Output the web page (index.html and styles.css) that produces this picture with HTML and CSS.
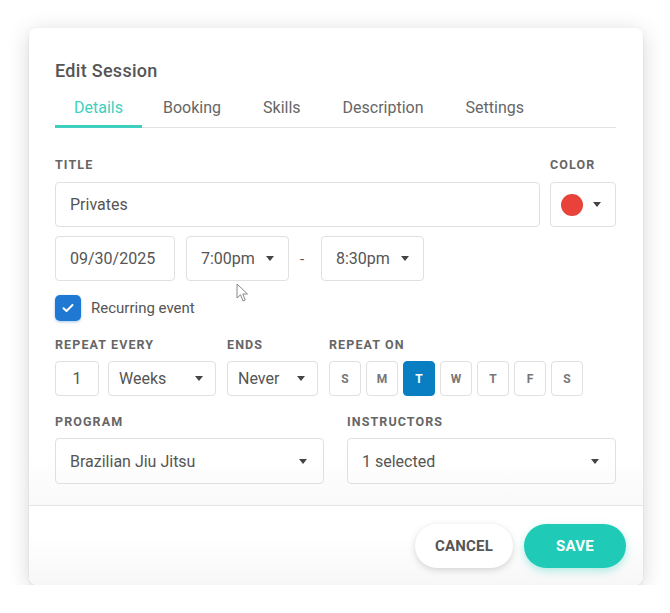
FILE: index.html
```html
<!DOCTYPE html>
<html lang="en">
<head>
    <meta charset="UTF-8">
    <meta name="viewport" content="width=device-width, initial-scale=1.0">
    <title>Edit Session</title>
    <link rel="stylesheet" href="styles.css">
</head>
<body>
    <div class="modal">
        <div class="modal-body">
            <h2 class="modal-title">Edit Session</h2>

            <div class="tabs">
                <span class="tab active">Details</span>
                <span class="tab">Booking</span>
                <span class="tab">Skills</span>
                <span class="tab">Description</span>
                <span class="tab">Settings</span>
            </div>

            <div class="row row-title">
                <div class="field grow">
                    <div class="label">Title</div>
                    <div class="input">Privates</div>
                </div>
                <div class="field">
                    <div class="label">Color</div>
                    <div class="input color-select">
                        <span class="dot"></span>
                        <span class="caret"></span>
                    </div>
                </div>
            </div>

            <div class="row row-time">
                <div class="input date">09/30/2025</div>
                <div class="input select time">7:00pm <span class="caret"></span></div>
                <span class="dash">-</span>
                <div class="input select time">8:30pm <span class="caret"></span></div>
            </div>

            <label class="check">
                <span class="box">
                    <svg width="12" height="10" viewBox="0 0 12 10"><path d="M1.5 5.2 L4.5 8 L10.5 2" fill="none" stroke="#fff" stroke-width="2" stroke-linecap="round" stroke-linejoin="round"/></svg>
                </span>
                Recurring event
            </label>

            <div class="row row-repeat">
                <div class="field">
                    <div class="label">Repeat every</div>
                    <div class="pair">
                        <div class="input small num">1</div>
                        <div class="input small select weeks">Weeks <span class="caret"></span></div>
                    </div>
                </div>
                <div class="field">
                    <div class="label">Ends</div>
                    <div class="input small select ends">Never <span class="caret"></span></div>
                </div>
                <div class="field">
                    <div class="label">Repeat on</div>
                    <div class="days">
                        <span class="day">S</span>
                        <span class="day">M</span>
                        <span class="day on">T</span>
                        <span class="day">W</span>
                        <span class="day">T</span>
                        <span class="day">F</span>
                        <span class="day">S</span>
                    </div>
                </div>
            </div>

            <div class="row row-program">
                <div class="field half">
                    <div class="label">Program</div>
                    <div class="input select">Brazilian Jiu Jitsu <span class="caret"></span></div>
                </div>
                <div class="field half">
                    <div class="label">Instructors</div>
                    <div class="input select">1 selected <span class="caret"></span></div>
                </div>
            </div>

            <!-- mouse pointer from the capture -->
            <svg class="pointer" width="14" height="20" viewBox="0 0 14 20"><path d="M1 1 L1 15 L4.5 11.8 L7 18 L9.2 17 L6.8 11 L11.5 11 Z" fill="#fff" stroke="#888" stroke-width="1" stroke-linejoin="round"/></svg>
        </div>

        <div class="modal-footer">
            <button class="btn btn-cancel">Cancel</button>
            <button class="btn btn-save">Save</button>
        </div>
    </div>
</body>
</html>
```

FILE: styles.css
```css
body {
    margin: 0;
    font-family: Roboto, "Liberation Sans", sans-serif;
    background-color: #fff;
    color: #555;
}
.modal {
    width: 614px;
    margin: 28px 0 0 29px;
    background-color: #fff;
    border-radius: 8px;
    box-shadow: 0 4px 22px rgba(0, 0, 0, 0.16), 0 1px 3px rgba(0, 0, 0, 0.08);
    overflow: hidden;
}
.modal-body {
    position: relative;
    padding: 33px 27px 21px 26px;
    border-bottom: 1px solid #e6e6e6;
    background: linear-gradient(to bottom, #fff 90%, #f9f9f9 100%);
}
.modal-title {
    margin: 0;
    font-size: 18px;
    line-height: 20px;
    font-weight: 500;
    letter-spacing: 0.3px;
    color: #555;
}
.tabs {
    display: flex;
    margin-top: 8px;
    border-bottom: 1px solid #e2e2e2;
}
.tab {
    padding: 9px 21px 9px 21px;
    font-size: 16px;
    line-height: 20px;
    color: #666;
}
.tab:first-child {
    padding-left: 19px;
    padding-right: 19px;
}
.tab.active {
    color: #3fcfbe;
    border-bottom: 3px solid #3fcfbe;
    margin-bottom: -1px;
    padding-bottom: 7px;
}
.row {
    display: flex;
    align-items: flex-end;
}
.row-title {
    margin-top: 29px;
    gap: 10px;
}
.field.grow {
    flex: 1;
}
.label {
    font-size: 12.5px;
    line-height: 16px;
    font-weight: bold;
    letter-spacing: 1.1px;
    text-transform: uppercase;
    color: #666;
    margin-bottom: 9px;
}
.input {
    box-sizing: border-box;
    height: 45px;
    display: flex;
    align-items: center;
    padding: 0 14px;
    border: 1px solid #e0e0e0;
    border-radius: 4px;
    font-size: 16px;
    color: #555;
}
.select {
    justify-content: space-between;
}
.caret {
    width: 0;
    height: 0;
    border-left: 4px solid transparent;
    border-right: 4px solid transparent;
    border-top: 5px solid #444;
    margin-right: 2px;
}
.color-select {
    width: 66px;
    padding: 0 12px 0 10px;
    justify-content: space-between;
}
.dot {
    width: 22px;
    height: 22px;
    border-radius: 50%;
    background-color: #e8423a;
}
.row-time {
    margin-top: 9px;
    align-items: center;
}
.date {
    width: 120px;
}
.time {
    width: 103px;
    margin-left: 11px;
    padding-right: 12px;
}
.dash {
    width: 21px;
    margin-left: 11px;
    font-size: 15px;
}
.dash + .time {
    margin-left: 0;
}
.check {
    display: flex;
    align-items: center;
    margin-top: 14px;
    font-size: 15px;
    color: #555;
}
.box {
    width: 26px;
    height: 26px;
    margin-right: 10px;
    border-radius: 5px;
    background-color: #1f78d1;
    box-shadow: 0 1px 3px rgba(31, 120, 209, 0.4);
    display: flex;
    align-items: center;
    justify-content: center;
}
.row-repeat {
    margin-top: 16px;
    gap: 11px;
}
.row-repeat .label {
    margin-bottom: 8px;
}
.pair {
    display: flex;
    gap: 9px;
}
.input.small {
    height: 35px;
    padding: 0 10px;
    font-size: 16px;
}
.num {
    width: 44px;
    justify-content: center;
}
.weeks {
    width: 108px;
    padding-left: 9px;
    padding-right: 12px;
}
.ends {
    width: 91px;
    padding-left: 8px;
    padding-right: 12px;
}
.days {
    display: flex;
    gap: 5px;
}
.day {
    box-sizing: border-box;
    width: 32px;
    height: 35px;
    display: flex;
    align-items: center;
    justify-content: center;
    border: 1px solid #e0e0e0;
    border-radius: 4px;
    font-size: 12px;
    font-weight: bold;
    color: #777;
}
.day.on {
    background-color: #0a7ec2;
    border-color: #0a7ec2;
    color: #fff;
}
.row-program {
    margin-top: 18px;
    gap: 23px;
}
.row-program .label {
    margin-bottom: 8px;
}
.field.half {
    width: 269px;
}
.row-program .input {
    height: 46px;
}
.pointer {
    position: absolute;
    left: 207px;
    top: 255px;
}
.modal-footer {
    display: flex;
    justify-content: flex-end;
    gap: 11px;
    padding: 18px 17px 17px 0;
    background: linear-gradient(to bottom, #fff 40%, #f7f7f7 100%);
}
.btn {
    height: 44px;
    border: none;
    border-radius: 22px;
    font-family: Roboto, "Liberation Sans", sans-serif;
    font-size: 15px;
    font-weight: bold;
    letter-spacing: 0.2px;
    text-transform: uppercase;
    cursor: pointer;
}
.btn-cancel {
    width: 98px;
    background-color: #fff;
    color: #555;
    box-shadow: 0 2px 7px rgba(0, 0, 0, 0.16);
}
.btn-save {
    width: 102px;
    background-color: #1fcbb6;
    color: #fff;
    box-shadow: 0 3px 8px rgba(31, 203, 182, 0.35);
}
```
